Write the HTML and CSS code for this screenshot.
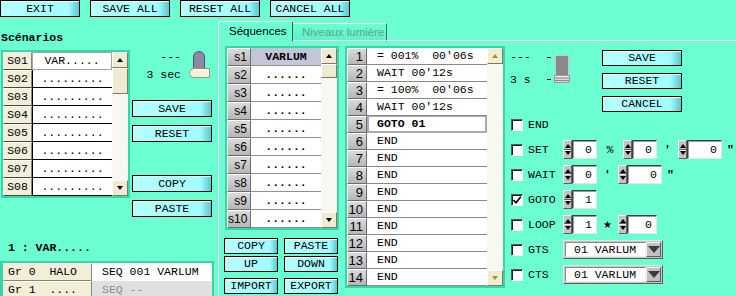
FILE: index.html
```html
<!DOCTYPE html>
<html lang="fr">
<head>
    <meta charset="UTF-8">
    <title>Scénarios</title>
    <link rel="stylesheet" href="styles.css">
</head>
<body>
<div class="app">
    <div class="topbar">
        <button class="btn">EXIT</button>
        <button class="btn">SAVE ALL</button>
        <button class="btn">RESET ALL</button>
        <button class="btn">CANCEL ALL</button>
    </div>

    <div class="main">
        <div class="left">
            <div class="sc-title">Scénarios</div>
            <div class="sc-area">
                <div class="list sc-list">
                    <div class="rows">
                        <div class="sc-row"><span class="sc-lbl">S01</span><span class="sc-name sel">VAR.....</span></div>
                        <div class="sc-row"><span class="sc-lbl">S02</span><span class="sc-name">.........</span></div>
                        <div class="sc-row"><span class="sc-lbl">S03</span><span class="sc-name">.........</span></div>
                        <div class="sc-row"><span class="sc-lbl">S04</span><span class="sc-name">.........</span></div>
                        <div class="sc-row"><span class="sc-lbl">S05</span><span class="sc-name">.........</span></div>
                        <div class="sc-row"><span class="sc-lbl">S06</span><span class="sc-name">.........</span></div>
                        <div class="sc-row"><span class="sc-lbl">S07</span><span class="sc-name">.........</span></div>
                        <div class="sc-row"><span class="sc-lbl">S08</span><span class="sc-name">.........</span></div>
                    </div>
                    <div class="vscroll">
                        <span class="sb-btn up"></span>
                        <span class="sb-thumb"></span>
                        <span class="sb-fill"></span>
                        <span class="sb-btn down"></span>
                    </div>
                </div>

                <div class="sc-side">
                    <div class="timer">
                        <div class="timer-lbl"><span>---</span><span>3 sec</span></div>
                        <svg class="toggle" width="22" height="28" viewBox="0 0 22 28">
                            <path d="M4.5 19 V6 a5.5 5.5 0 0 1 11 0 V19 Z" fill="#8c8aa2" stroke="#55536a"/>
                            <path d="M5 17.5 H20.5 V26.5 H5 a4.5 4.5 0 0 1 0 -9 Z" fill="#f3efdb" stroke="#9a967e"/>
                            <path d="M5 19 H19.5" stroke="#fffdf2"/>
                        </svg>
                    </div>
                    <button class="btn">SAVE</button>
                    <button class="btn">RESET</button>
                    <button class="btn copy-btn">COPY</button>
                    <button class="btn">PASTE</button>
                </div>
            </div>

            <div class="cur-title">1 : VAR.....</div>
            <div class="groups">
                <div class="g-row"><span class="g-lbl">Gr 0  HALO</span><span class="g-val">SEQ 001 VARLUM</span></div>
                <div class="g-row"><span class="g-lbl">Gr 1  ....</span><span class="g-val empty">SEQ --</span></div>
            </div>
        </div>

        <div class="tabs-area">
            <div class="tabs">
                <span class="tab active">Séquences</span>
                <span class="tab off">Niveaux lumière</span>
                <span class="tabs-fill"></span>
            </div>
            <div class="panel">
                <div class="seq-col">
                    <div class="list seq-list">
                        <div class="rows">
                            <div class="seq-row"><span class="seq-lbl">s1</span><span class="seq-name sel">VARLUM</span></div>
                            <div class="seq-row"><span class="seq-lbl">s2</span><span class="seq-name">......</span></div>
                            <div class="seq-row"><span class="seq-lbl">s3</span><span class="seq-name">......</span></div>
                            <div class="seq-row"><span class="seq-lbl">s4</span><span class="seq-name">......</span></div>
                            <div class="seq-row"><span class="seq-lbl">s5</span><span class="seq-name">......</span></div>
                            <div class="seq-row"><span class="seq-lbl">s6</span><span class="seq-name">......</span></div>
                            <div class="seq-row"><span class="seq-lbl">s7</span><span class="seq-name">......</span></div>
                            <div class="seq-row"><span class="seq-lbl">s8</span><span class="seq-name">......</span></div>
                            <div class="seq-row"><span class="seq-lbl">s9</span><span class="seq-name">......</span></div>
                            <div class="seq-row"><span class="seq-lbl">s10</span><span class="seq-name">......</span></div>
                        </div>
                        <div class="vscroll">
                            <span class="sb-btn up"></span>
                            <span class="sb-thumb short"></span>
                            <span class="sb-fill"></span>
                            <span class="sb-btn down"></span>
                        </div>
                    </div>
                    <div class="seq-btns">
                        <button class="btn">COPY</button>
                        <button class="btn">PASTE</button>
                        <button class="btn">UP</button>
                        <button class="btn">DOWN</button>
                        <button class="btn low">IMPORT</button>
                        <button class="btn low">EXPORT</button>
                    </div>
                </div>

                <div class="list step-list">
                    <div class="rows">
                        <div class="st-row"><span class="st-num">1</span><span class="st-txt">= 001%  00'06s</span></div>
                        <div class="st-row"><span class="st-num">2</span><span class="st-txt">WAIT 00'12s</span></div>
                        <div class="st-row"><span class="st-num">3</span><span class="st-txt">= 100%  00'06s</span></div>
                        <div class="st-row"><span class="st-num">4</span><span class="st-txt">WAIT 00'12s</span></div>
                        <div class="st-row"><span class="st-num">5</span><span class="st-txt focus">GOTO 01</span></div>
                        <div class="st-row"><span class="st-num">6</span><span class="st-txt">END</span></div>
                        <div class="st-row"><span class="st-num">7</span><span class="st-txt">END</span></div>
                        <div class="st-row"><span class="st-num">8</span><span class="st-txt">END</span></div>
                        <div class="st-row"><span class="st-num">9</span><span class="st-txt">END</span></div>
                        <div class="st-row"><span class="st-num">10</span><span class="st-txt">END</span></div>
                        <div class="st-row"><span class="st-num">11</span><span class="st-txt">END</span></div>
                        <div class="st-row"><span class="st-num">12</span><span class="st-txt">END</span></div>
                        <div class="st-row"><span class="st-num">13</span><span class="st-txt">END</span></div>
                        <div class="st-row"><span class="st-num">14</span><span class="st-txt">END</span></div>
                    </div>
                    <div class="vscroll">
                        <span class="sb-btn up pale"></span>
                        <span class="sb-fill"></span>
                        <span class="sb-btn down pale"></span>
                    </div>
                </div>

                <div class="ctrl">
                    <div class="ctrl-top">
                        <div class="ctrl-timer"><span>---</span><span>3 s</span></div>
                        <svg class="slider" width="24" height="30" viewBox="0 0 24 30">
                            <path d="M0 3.5 H4 M0 25.5 H4" stroke="#000"/>
                            <rect x="8.5" y="1.5" width="13" height="20" fill="#898989" stroke="#c8c8c8"/>
                            <rect x="7.5" y="21.5" width="15" height="7" fill="#d6d6d6" stroke="#9a9a9a"/>
                            <path d="M8 24 H22 M8 26.5 H22" stroke="#8a8a8a"/>
                            <path d="M8 22.5 H22" stroke="#f4f4f4"/>
                        </svg>
                        <div class="ctrl-btns">
                            <button class="btn">SAVE</button>
                            <button class="btn">RESET</button>
                            <button class="btn">CANCEL</button>
                        </div>
                    </div>

                    <div class="opt"><span class="chk"></span><span class="opt-lbl">END</span></div>
                    <div class="opt">
                        <span class="chk"></span><span class="opt-lbl">SET</span>
                        <span class="spin"><span class="spin-arr"></span><span class="spin-in sm">0</span></span>
                        <span class="sep wide">%</span>
                        <span class="spin"><span class="spin-arr"></span><span class="spin-in sm">0</span></span>
                        <span class="sep">'</span>
                        <span class="spin"><span class="spin-arr"></span><span class="spin-in lg">0</span></span>
                        <span class="sep end">"</span>
                    </div>
                    <div class="opt">
                        <span class="chk"></span><span class="opt-lbl">WAIT</span>
                        <span class="spin"><span class="spin-arr"></span><span class="spin-in sm">0</span></span>
                        <span class="sep">'</span>
                        <span class="spin"><span class="spin-arr"></span><span class="spin-in lg">0</span></span>
                        <span class="sep end">"</span>
                    </div>
                    <div class="opt">
                        <span class="chk">
                            <svg width="10" height="10" viewBox="0 0 10 10"><polyline points="1.5,5 4,7.8 8.8,1.8" fill="none" stroke="#000" stroke-width="1.7"/></svg>
                        </span><span class="opt-lbl">GOTO</span>
                        <span class="spin"><span class="spin-arr"></span><span class="spin-in sm">1</span></span>
                    </div>
                    <div class="opt">
                        <span class="chk"></span><span class="opt-lbl">LOOP</span>
                        <span class="spin"><span class="spin-arr"></span><span class="spin-in sm">1</span></span>
                        <span class="sep star">★</span>
                        <span class="spin"><span class="spin-arr"></span><span class="spin-in md">0</span></span>
                    </div>
                    <div class="opt">
                        <span class="chk"></span><span class="opt-lbl">GTS</span>
                        <span class="combo"><span class="combo-txt">01 VARLUM</span><span class="combo-arr"></span></span>
                    </div>
                    <div class="opt">
                        <span class="chk"></span><span class="opt-lbl">CTS</span>
                        <span class="combo"><span class="combo-txt">01 VARLUM</span><span class="combo-arr"></span></span>
                    </div>
                </div>
            </div>
        </div>
    </div>
</div>
</body>
</html>
```

FILE: styles.css
```css
body {
    margin: 0;
    background: #6cffd2;
    font-family: "Liberation Mono", "DejaVu Sans Mono", monospace;
    font-size: 11.5px;
    color: #000;
}

.app {
    width: 736px;
    height: 296px;
    overflow: hidden;
}

/* buttons */

.btn {
    box-sizing: border-box;
    width: 80px;
    height: 17px;
    padding: 0;
    border: 1px solid #000;
    background: linear-gradient(90deg, #b6ffff 0%, #a2fcff 86%, #5cc6ce 100%);
    box-shadow: inset 0 1px 0 #e6ffff;
    font-family: inherit;
    font-size: 11.5px;
    line-height: 15px;
    color: #000;
    text-align: center;
}

.topbar {
    display: flex;
    gap: 10px;
    height: 17px;
}

.main {
    display: flex;
    margin-top: 4px;
}

/* left column */

.left {
    width: 218px;
    padding-top: 10px;
}

.sc-title {
    font-weight: bold;
    line-height: 14px;
    padding-left: 1px;
    margin-bottom: 5px;
}

.sc-area {
    display: flex;
}

.list {
    display: flex;
    box-sizing: border-box;
    border: 2px solid #38d6a6;
    background: #f8f8f2;
}

.rows {
    display: flex;
    flex-direction: column;
}

.sc-list {
    margin-left: 1px;
    width: 129px;
    height: 148px;
}

.sc-row {
    display: flex;
    height: 18px;
}

.sc-lbl {
    width: 29px;
    box-sizing: border-box;
    background: #f2eed8;
    border: 1px solid;
    border-color: #fff #8a8670 #4a4838 #fff;
    text-align: center;
    line-height: 16px;
}

.sc-name {
    width: 80px;
    box-sizing: border-box;
    background: #fff;
    border-left: 1px solid #000;
    border-bottom: 1px solid #000;
    text-align: center;
    line-height: 17px;
}

.sc-name.sel {
    border: 1px solid #a4a4a4;
    line-height: 16px;
}

.vscroll {
    display: flex;
    flex-direction: column;
    width: 16px;
    background: #f8f8f2;
}

.sb-btn,
.sb-thumb {
    box-sizing: border-box;
    background: #efebd3;
    border: 1px solid;
    border-color: #fff #7e7a62 #7e7a62 #fff;
}

.sb-btn {
    height: 16px;
    display: flex;
    align-items: center;
    justify-content: center;
}

.sb-btn.up::after {
    content: "";
    border-left: 3px solid transparent;
    border-right: 3px solid transparent;
    border-bottom: 4px solid #000;
}

.sb-btn.down::after {
    content: "";
    border-left: 3px solid transparent;
    border-right: 3px solid transparent;
    border-top: 4px solid #000;
}

.sb-btn.pale {
    background: #f2eecc;
}

.sb-btn.pale::after {
    border-bottom-color: #9a8c5a;
    border-top-color: #9a8c5a;
}

.sb-thumb {
    height: 26px;
}

.sb-thumb.short {
    height: 14px;
}

.sb-fill {
    flex: 1;
}

.sc-side {
    display: flex;
    flex-direction: column;
    gap: 8px;
    width: 80px;
    margin-left: 2px;
}

.timer {
    display: flex;
    height: 42px;
}

.timer-lbl {
    display: flex;
    flex-direction: column;
    gap: 4px;
    width: 49px;
    text-align: right;
    line-height: 14px;
}

.toggle {
    margin-left: 8px;
    margin-top: 1px;
}

.copy-btn {
    margin-top: 25px;
}

.cur-title {
    margin-top: 24px;
    padding-left: 8px;
    font-weight: bold;
    line-height: 14px;
}

.groups {
    width: 209px;
    margin-top: 6px;
    border: 2px solid #38d6a6;
    border-left-width: 3px;
    border-bottom: none;
}

.g-row {
    display: flex;
    height: 18px;
}

.g-lbl {
    width: 89px;
    box-sizing: border-box;
    background: #f2eed8;
    border: 1px solid;
    border-color: #fff #8a8670 #8a8670 #fff;
    padding-left: 4px;
    white-space: pre;
    line-height: 16px;
}

.g-val {
    width: 120px;
    box-sizing: border-box;
    background: #fff;
    padding-left: 10px;
    line-height: 18px;
}

.g-val.empty {
    background: #e0e0e0;
    color: #8c8c8c;
}

/* tabs */

.tabs-area {
    display: flex;
    flex-direction: column;
    width: 518px;
}

.tabs {
    display: flex;
    align-items: flex-end;
    height: 20px;
}

.tab {
    box-sizing: border-box;
    font-family: "Liberation Sans", Arial, sans-serif;
    font-size: 11.5px;
    white-space: nowrap;
    overflow: hidden;
}

.tab.active {
    width: 75px;
    height: 20px;
    padding-left: 10px;
    border: 1px solid #fff;
    border-right-color: #2e5e4e;
    border-bottom: none;
    border-radius: 2px 2px 0 0;
    line-height: 18px;
}

.tab.off {
    width: 94px;
    height: 18px;
    padding-left: 9px;
    border: 1px solid #fff;
    border-left: none;
    border-right-color: #3a7864;
    color: #58a88a;
    line-height: 16px;
    background: linear-gradient(#6cffd2, #5ff0c4);
}

.tabs-fill {
    flex: 1;
    height: 1px;
    background: #fff;
}

.panel {
    display: flex;
    height: 255px;
    border-left: 1px solid #fff;
    padding: 5px 0 0 5px;
}

/* sequences */

.seq-col {
    width: 115px;
}

.seq-list {
    margin-left: 1px;
    width: 114px;
    height: 184px;
}

.seq-row {
    display: flex;
    height: 18px;
}

.seq-lbl {
    width: 24px;
    box-sizing: border-box;
    background: linear-gradient(#dadada, #b6b6b6);
    border: 1px solid;
    border-color: #fff #6e6e6e #6e6e6e #fff;
    font-family: "Liberation Sans", Arial, sans-serif;
    font-size: 12px;
    text-align: right;
    padding-right: 3px;
    line-height: 16px;
}

.seq-name {
    width: 70px;
    box-sizing: border-box;
    background: #fff;
    border-bottom: 1px solid #909090;
    text-align: center;
    font-weight: bold;
    line-height: 17px;
}

.seq-name.sel {
    background: #c2c6d6;
}

.seq-btns {
    display: grid;
    grid-template-columns: 54px 54px;
    column-gap: 6px;
    row-gap: 2px;
    margin-top: 8px;
}

.seq-btns .btn {
    width: 54px;
    height: 16px;
    line-height: 14px;
}

.seq-btns .low {
    margin-top: 4px;
}

/* steps */

.step-list {
    margin-left: 6px;
    width: 160px;
    height: 242px;
}

.st-row {
    display: flex;
    height: 17px;
}

.st-num {
    width: 20px;
    box-sizing: border-box;
    background: linear-gradient(#dadada, #b6b6b6);
    border: 1px solid;
    border-color: #fff #6e6e6e #6e6e6e #fff;
    font-family: "Liberation Sans", Arial, sans-serif;
    font-size: 13px;
    text-align: right;
    padding-right: 3px;
    line-height: 15px;
}

.st-txt {
    width: 120px;
    box-sizing: border-box;
    background: #fff;
    border-bottom: 1px solid #8a8a8a;
    padding-left: 10px;
    line-height: 16px;
    white-space: pre;
}

.st-txt.focus {
    border: 2px solid #ababab;
    border-top-width: 1px;
    padding-left: 8px;
    font-weight: bold;
    line-height: 14px;
}

/* controls */

.ctrl {
    display: flex;
    flex-direction: column;
    width: 226px;
    margin-left: 5px;
}

.ctrl-top {
    display: flex;
    height: 66px;
}

.ctrl-timer {
    display: flex;
    flex-direction: column;
    gap: 9px;
    width: 37px;
    padding-top: 4px;
    line-height: 14px;
}

.slider {
    margin-top: 8px;
}

.ctrl-btns {
    display: flex;
    flex-direction: column;
    gap: 7px;
    margin-left: 31px;
    padding-top: 4px;
}

.ctrl-btns .btn {
    height: 16px;
    line-height: 14px;
}

.opt {
    display: flex;
    align-items: center;
    height: 25px;
}

.chk {
    display: flex;
    align-items: center;
    justify-content: center;
    width: 12px;
    height: 12px;
    box-sizing: border-box;
    margin-left: 1px;
    background: #fff;
    border: 1px solid;
    border-color: #5a5a5a #fff #fff #5a5a5a;
    box-shadow: inset 1px 1px 0 #202020;
}

.opt-lbl {
    width: 40px;
    box-sizing: border-box;
    padding-left: 5px;
}

.spin {
    display: flex;
    height: 19px;
}

.spin-arr {
    display: flex;
    flex-direction: column;
    align-items: center;
    justify-content: space-evenly;
    width: 9px;
    box-sizing: border-box;
    border: 1px solid;
    border-color: #f0f0f0 #5e5e5e #5e5e5e #f0f0f0;
    background: linear-gradient(#c4c4c4 0 calc(50% - 1px), #5e5e5e calc(50% - 1px) 50%, #f0f0f0 50% calc(50% + 1px), #c4c4c4 calc(50% + 1px));
}

.spin-arr::before {
    content: "";
    border-left: 3px solid transparent;
    border-right: 3px solid transparent;
    border-bottom: 4px solid #000;
}

.spin-arr::after {
    content: "";
    border-left: 3px solid transparent;
    border-right: 3px solid transparent;
    border-top: 4px solid #000;
}

.spin-in {
    box-sizing: border-box;
    background: #fff;
    border: 1px solid;
    border-color: #404040 #e4e4e4 #e4e4e4 #404040;
    box-shadow: inset 1px 1px 0 #9a9a9a;
    text-align: right;
    padding-right: 4px;
    line-height: 17px;
}

.spin-in.sm {
    width: 25px;
}

.spin-in.md {
    width: 30px;
}

.spin-in.lg {
    width: 35px;
}

.sep {
    width: 21px;
    text-align: center;
    font-weight: bold;
}

.sep.wide {
    width: 26px;
    font-weight: normal;
}

.sep.end {
    width: auto;
    padding-left: 5px;
}

.sep.star {
    font-family: "DejaVu Sans", sans-serif;
    font-size: 10px;
    font-weight: normal;
}

.combo {
    display: flex;
    width: 100px;
    height: 19px;
    box-sizing: border-box;
    padding: 1px;
    background: #c6c6c6;
    border: 1px solid;
    border-color: #e4e4e4 #5e5e5e #5e5e5e #e4e4e4;
}

.combo-txt {
    flex: 1;
    background: #fff;
    border: 1px solid;
    border-color: #8a8a8a #f0f0f0 #f0f0f0 #8a8a8a;
    padding-left: 8px;
    line-height: 14px;
}

.combo-arr {
    display: flex;
    align-items: center;
    justify-content: center;
    width: 15px;
    box-sizing: border-box;
    background: #c0c0c0;
    border: 1px solid;
    border-color: #f0f0f0 #5e5e5e #5e5e5e #f0f0f0;
}

.combo-arr::after {
    content: "";
    border-left: 6px solid transparent;
    border-right: 6px solid transparent;
    border-top: 7px solid #3a3a3a;
}
```
